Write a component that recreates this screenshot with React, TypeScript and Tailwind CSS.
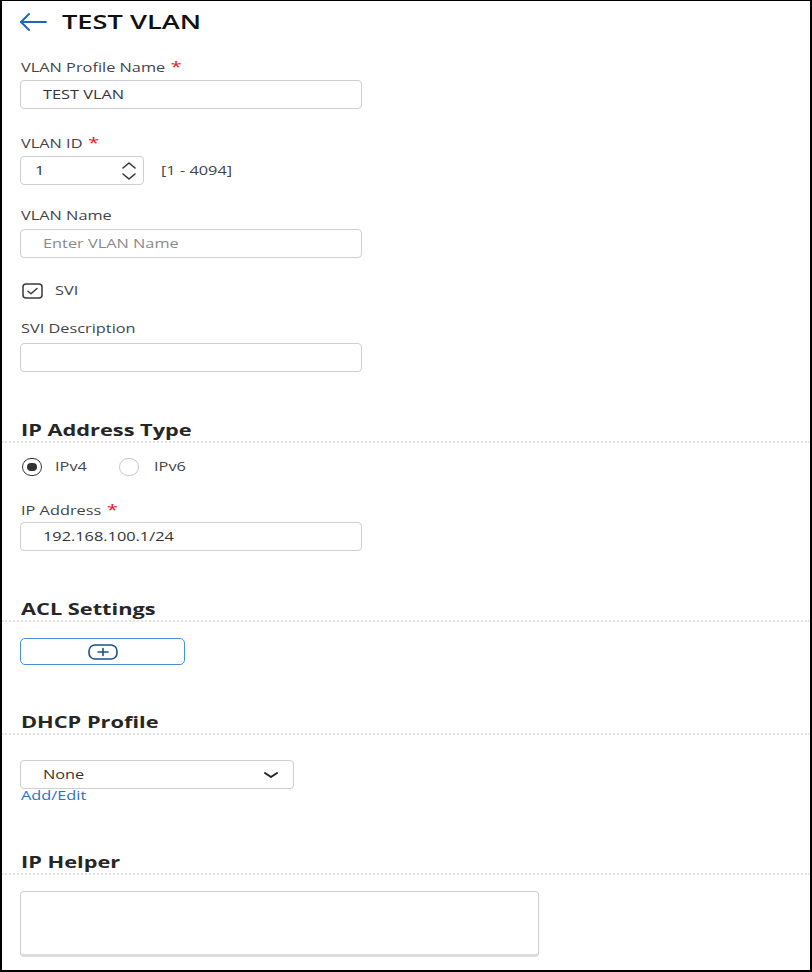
import React, { useState } from 'react';

// text in the shot is stretched wide, so every run of text gets the same x-scale
const W: React.FC<{ children: React.ReactNode; className?: string }> = ({ children, className }) => (
    <span className={`inline-block origin-left scale-x-[1.36] whitespace-nowrap ${className ?? ''}`}>{children}</span>
);

const Label: React.FC<{ text: string; required?: boolean }> = ({ text, required }) => (
    <div className="h-5 pl-px leading-5 text-[12px] text-[#444]">
        <W>
            {text}
            {required && <span className="ml-1 text-[15px] text-[#e0201c]">*</span>}
        </W>
    </div>
);

const Section: React.FC<{ title: string; className?: string }> = ({ title, className }) => (
    <div className={`border-b-2 border-dotted border-[#e4e4e4] pl-[19px] ${className ?? ''}`}>
        <div className="h-[22px] leading-[22px] text-[16px] font-bold text-[#262626]">
            <W>{title}</W>
        </div>
    </div>
);

const TextBox: React.FC<{ value?: string; placeholder?: string; className?: string }> = ({ value, placeholder, className }) => (
    <div className={`flex h-[29px] items-center rounded border border-[#cfcfcf] bg-white pl-[22px] text-[12px] ${className ?? ''}`}>
        {value ? <W className="text-[#333]">{value}</W> : placeholder ? <W className="text-[#8a8a8a]">{placeholder}</W> : null}
    </div>
);

export default function App() {
    const [ipType, setIpType] = useState<'v4' | 'v6'>('v4');

    return (
        <div
            className="h-[972px] w-[812px] overflow-hidden border-x-2 border-t border-b-2 border-black bg-white"
            style={{ fontFamily: '"Open Sans", "Noto Sans", sans-serif' }}
        >
            {/* header */}
            <div className="flex h-[42px] items-center pl-4">
                <svg width="30" height="20" viewBox="0 0 30 20" fill="none" stroke="#1f66c2" strokeWidth="2" strokeLinecap="round" strokeLinejoin="round">
                    <path d="M28 10H3" />
                    <path d="M11 2L3 10L11 18" />
                </svg>
                <div className="ml-[14px] text-[20px] font-semibold text-[#111]">
                    <W>TEST VLAN</W>
                </div>
            </div>

            <div className="pl-[18px]">
                <div className="mt-[13px]">
                    <Label text="VLAN Profile Name" required />
                    <TextBox value="TEST VLAN" className="mt-1 w-[342px] h-[28px]" />
                </div>

                <div className="mt-[23px]">
                    <Label text="VLAN ID" required />
                    <div className="mt-1 flex items-center">
                        <div className="flex h-[29px] w-[124px] items-center justify-between rounded border border-[#cfcfcf] pl-[14px] pr-[5px] text-[12px] text-[#333]">
                            <W>1</W>
                            <svg width="18" height="22" viewBox="0 0 18 22" fill="none" stroke="#333" strokeWidth="1.6" strokeLinecap="round" strokeLinejoin="round">
                                <path d="M3 8L9 3L15 8" />
                                <path d="M3 14L9 19L15 14" />
                            </svg>
                        </div>
                        <div className="ml-[17px] text-[12px] text-[#444]">
                            <W>[1 - 4094]</W>
                        </div>
                    </div>
                </div>

                <div className="mt-[21px]">
                    <Label text="VLAN Name" />
                    <TextBox placeholder="Enter VLAN Name" className="mt-[3px] w-[342px]" />
                </div>

                <div className="mt-[23px] flex h-5 items-center">
                    <svg width="21" height="16" viewBox="0 0 21 16" fill="none" className="ml-[2px]">
                        <rect x="1" y="1" width="19" height="14" rx="3" stroke="#3a3a3a" strokeWidth="1.5" />
                        <path d="M6 8.2L9 10.8L15 5.5" stroke="#3a3a3a" strokeWidth="1.5" strokeLinecap="round" strokeLinejoin="round" />
                    </svg>
                    <div className="ml-[12px] text-[12px] text-[#444]">
                        <W>SVI</W>
                    </div>
                </div>

                <div className="mt-[18px]">
                    <Label text="SVI Description" />
                    <TextBox className="mt-1 w-[342px]" />
                </div>
            </div>

            <Section title="IP Address Type" className="mt-[47px]" />

            <div className="pl-[18px]">
                <div className="mt-[14px] flex h-5 items-center text-[12px] text-[#444]">
                    <button type="button" onClick={() => setIpType('v4')} className="flex items-center">
                        <span className={`ml-[2px] flex h-[18px] w-[20px] items-center justify-center rounded-full border-[1.5px] ${ipType === 'v4' ? 'border-[#333]' : 'border-[#c8c8c8]'}`}>
                            {ipType === 'v4' && <span className="h-[8px] w-[10px] rounded-full bg-[#333]" />}
                        </span>
                        <span className="ml-[13px] w-[52px] text-left">
                            <W>IPv4</W>
                        </span>
                    </button>
                    <button type="button" onClick={() => setIpType('v6')} className="ml-[12px] flex items-center">
                        <span className={`flex h-[18px] w-[20px] items-center justify-center rounded-full border-[1.5px] ${ipType === 'v6' ? 'border-[#333]' : 'border-[#c8c8c8]'}`}>
                            {ipType === 'v6' && <span className="h-[8px] w-[10px] rounded-full bg-[#333]" />}
                        </span>
                        <span className="ml-[15px]">
                            <W>IPv6</W>
                        </span>
                    </button>
                </div>

                <div className="mt-[22px]">
                    <Label text="IP Address" required />
                    <TextBox value="192.168.100.1/24" className="mt-[3px] w-[342px]" />
                </div>
            </div>

            <Section title="ACL Settings" className="mt-[47px]" />

            <div className="pl-[18px]">
                <button type="button" className="mt-4 flex h-[27px] w-[165px] items-center justify-center rounded-[5px] border border-[#4a8fd8]">
                    <svg width="30" height="16" viewBox="0 0 30 16" fill="none" stroke="#1d4f8f" strokeWidth="1.6" strokeLinecap="round">
                        <rect x="1" y="1" width="28" height="14" rx="6" />
                        <path d="M15 4.5V11.5M10 8H20" />
                    </svg>
                </button>
            </div>

            <Section title="DHCP Profile" className="mt-[46px]" />

            <div className="pl-[18px]">
                <div className="mt-[25px] flex h-[29px] w-[274px] items-center justify-between rounded border border-[#cfcfcf] pl-[22px] pr-[14px] text-[12px] text-[#333]">
                    <W>None</W>
                    <svg width="16" height="10" viewBox="0 0 16 10" fill="none" stroke="#222" strokeWidth="2" strokeLinecap="round" strokeLinejoin="round">
                        <path d="M2 3L8 7L14 3" />
                    </svg>
                </div>
                <div className="h-[14px] pl-px leading-[14px] text-[12px] text-[#2a6fc9]">
                    <W>Add/Edit</W>
                </div>
            </div>

            <Section title="IP Helper" className="mt-[48px]" />

            <div className="pl-[18px]">
                <div className="mt-4 h-[66px] w-[519px] rounded border border-[#cfcfcf] border-b-[3px] border-b-[#dcdcdc]" />
            </div>
        </div>
    );
}
